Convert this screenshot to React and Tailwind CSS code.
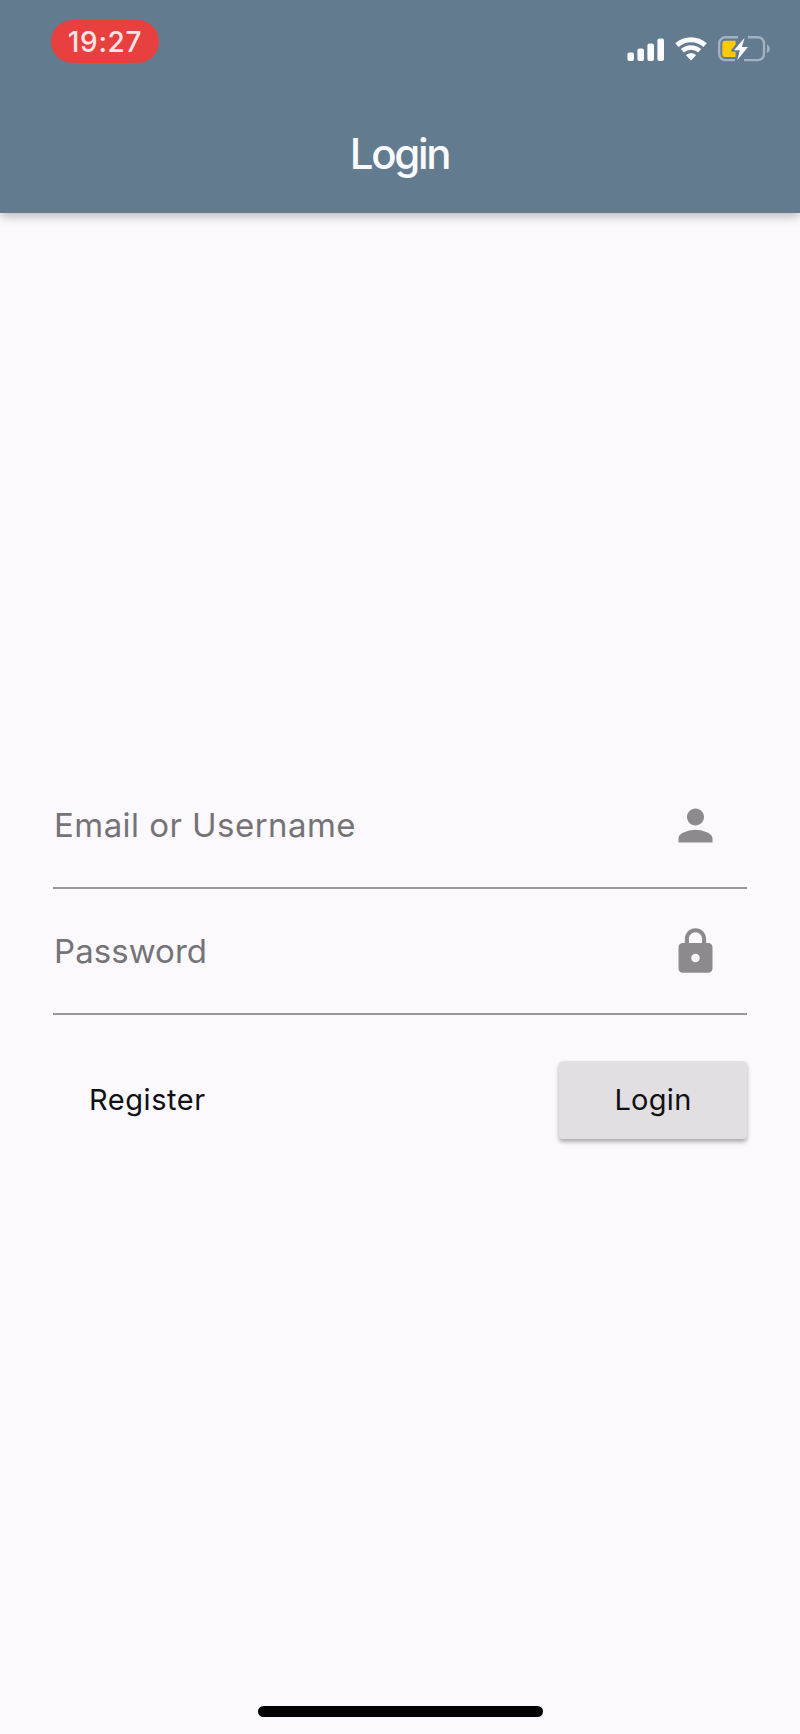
import React from 'react';

function SignalIcon() {
  return (
    <svg className="h-6 w-[37px]" viewBox="0 0 37 24" fill="#fbfaff">
      <rect x="0.4" y="15.5" width="6.6" height="8.5" rx="2" />
      <rect x="10.4" y="11.5" width="6.6" height="12.5" rx="2" />
      <rect x="20.4" y="6.5" width="6.6" height="17.5" rx="2" />
      <rect x="30.4" y="1.5" width="6.6" height="22.5" rx="2" />
    </svg>
  );
}

function WifiIcon() {
  return (
    <svg className="h-6 w-8" viewBox="0 0 32 24" fill="none">
      <path d="M1.9 8.1C9.7 0.9 22.3 0.9 30.1 8.1" stroke="#fbfaff" strokeWidth="5" />
      <path d="M7.3 13.7C12.3 9.4 19.7 9.4 24.7 13.7" stroke="#fbfaff" strokeWidth="4.6" />
      <path d="M10.9 18.2C13.9 15.7 18.1 15.7 21.1 18.2L16 23.6Z" fill="#fbfaff" />
    </svg>
  );
}

function BatteryIcon() {
  return (
    <svg className="h-[26px] w-[52px]" viewBox="0 0 52 26" fill="none">
      <path
        d="M20 1.3H7.2A6 6 0 0 0 1.2 7.3V18.1A6 6 0 0 0 7.2 24.1H17M30 1.3H40A6 6 0 0 1 46 7.3V18.1A6 6 0 0 1 40 24.1H26"
        stroke="#a3b1c0"
        strokeWidth="2.4"
      />
      <path d="M49 8.5C52.7 10 52.7 15.4 49 16.9Z" fill="#a3b1c0" />
      <path d="M7.3 4.7H17.6V8.5L13 14.6L14 15.8H17.6V20.9H7.3A3 3 0 0 1 4.3 17.9V7.7A3 3 0 0 1 7.3 4.7Z" fill="#fbca08" />
      <path d="M26.6 1.8L16 14.3H21.8L19.2 24.2L30 11.1H23.8Z" fill="#fbfaff" />
    </svg>
  );
}

function PersonIcon() {
  return (
    <svg className="h-[51px] w-[51px]" viewBox="0 0 24 24" fill="#8c8a8d">
      <path d="M12 12c2.21 0 4-1.79 4-4s-1.79-4-4-4-4 1.79-4 4 1.79 4 4 4zm0 2c-2.67 0-8 1.34-8 4v2h16v-2c0-2.66-5.33-4-8-4z" />
    </svg>
  );
}

function LockIcon() {
  return (
    <svg className="h-[51px] w-[51px]" viewBox="0 0 24 24" fill="#8c8a8d">
      <path d="M18 8h-1V6c0-2.76-2.24-5-5-5S7 3.24 7 6v2H6c-1.1 0-2 .9-2 2v10c0 1.1.9 2 2 2h12c1.1 0 2-.9 2-2V10c0-1.1-.9-2-2-2zm-6 9c-1.1 0-2-.9-2-2s.9-2 2-2 2 .9 2 2-.9 2-2 2zm3.1-9H8.9V6c0-1.71 1.39-3.1 3.1-3.1 1.71 0 3.1 1.39 3.1 3.1v2z" />
    </svg>
  );
}

function Field({ label, labelClass, icon }) {
  return (
    <div className="flex h-[126px] items-center justify-between border-b-2 border-[#989699] pl-px pr-[26px] pt-px">
      <span className={`text-[33px] leading-none text-[#757376] ${labelClass}`}>{label}</span>
      {icon}
    </div>
  );
}

export default function App() {
  return (
    <div className="flex h-[1734px] w-[800px] flex-col bg-[#fbf9fd] font-['Inter',sans-serif]">
      <header className="flex h-[213px] flex-col bg-[#627b8e] shadow-[0_3px_10px_rgba(0,0,0,0.28)]">
        <div className="flex h-[94px] items-start justify-between pl-[51px] pr-[30.5px] pt-5">
          <div className="flex h-[43px] w-[108px] items-center justify-center rounded-full bg-[#e8403e]">
            <span className="text-[28px] font-medium leading-none tracking-[0.7px] text-[#fde4e6]">19:27</span>
          </div>
          <div className="flex items-center pt-4">
            <SignalIcon />
            <div className="w-[11px]" />
            <WifiIcon />
            <div className="w-[11px]" />
            <BatteryIcon />
          </div>
        </div>
        <h1 className="flex h-[119px] items-center justify-center pr-px pt-px text-[42px] font-medium leading-none tracking-[-2.3px] text-[#fbfaff]">
          Login
        </h1>
      </header>

      <main className="flex flex-1 flex-col px-[53px] pt-[550px]">
        <Field label="Email or Username" labelClass="tracking-[0.45px]" icon={<PersonIcon />} />
        <Field label="Password" labelClass="tracking-[0.05px]" icon={<LockIcon />} />
        <div className="mt-[46px] flex h-[77px] items-center justify-between">
          <button className="pl-9 text-[29px] leading-none tracking-[0.55px] text-[#111013]">Register</button>
          <button className="h-[78px] w-[188px] rounded-[4px] bg-[#e1dfe2] text-[29px] leading-none tracking-[0.3px] text-[#111013] shadow-[0_3px_4px_rgba(0,0,0,0.32)]">
            Login
          </button>
        </div>
      </main>

      <footer className="flex h-[28px] justify-center">
        <div className="h-[11px] w-[285px] rounded-full bg-black" />
      </footer>
    </div>
  );
}
